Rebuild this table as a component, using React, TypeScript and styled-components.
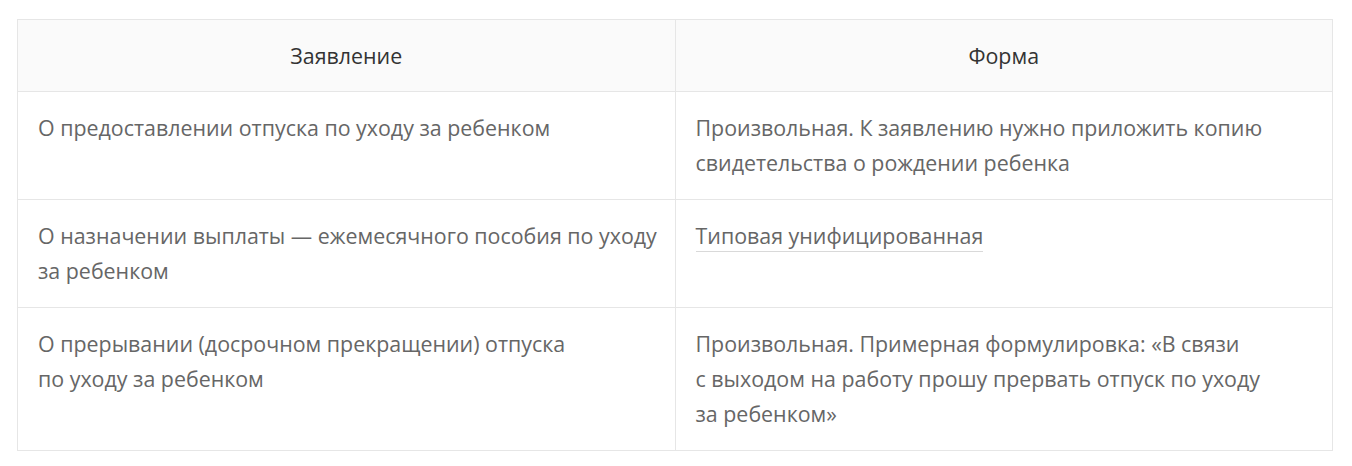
import styled, { createGlobalStyle } from "styled-components";

const Global = createGlobalStyle`
  body {
    margin: 0;
    background: #fff;
    font-family: "Open Sans", "Noto Sans", sans-serif;
  }
`;

const Wrapper = styled.div`
  padding: 19px 19px 0 17px;
`;

const Table = styled.table`
  width: 100%;
  border-collapse: collapse;
  table-layout: fixed;
  font-size: 21.4px;
  line-height: 35px;
  color: #666;
`;

const HeadCell = styled.th`
  width: 50%;
  padding: 18px 20px;
  background: #fafafa;
  border: 1px solid #e6e6e6;
  font-weight: 400;
  color: #333;
  text-align: center;
`;

// line breaks are set by hand, so cells don't wrap on their own
const Cell = styled.td`
  padding: 18px 20px 19px;
  border: 1px solid #e6e6e6;
  vertical-align: top;
  text-align: left;
  white-space: nowrap;
`;

const DocLink = styled.a`
  color: #666;
  text-decoration: none;
  border-bottom: 1px solid #d9d9d9;
  padding-bottom: 1px;
`;

const rows = [
  {
    kind: <>О предоставлении отпуска по уходу за ребенком</>,
    form: (
      <>
        Произвольная. К заявлению нужно приложить копию
        <br />
        свидетельства о рождении ребенка
      </>
    ),
  },
  {
    kind: (
      <>
        О назначении выплаты — ежемесячного пособия по уходу
        <br />
        за ребенком
      </>
    ),
    form: <DocLink href="#">Типовая унифицированная</DocLink>,
  },
  {
    kind: (
      <>
        О прерывании (досрочном прекращении) отпуска
        <br />
        по уходу за ребенком
      </>
    ),
    form: (
      <>
        Произвольная. Примерная формулировка: «В связи
        <br />
        с выходом на работу прошу прервать отпуск по уходу
        <br />
        за ребенком»
      </>
    ),
  },
];

export default function App() {
  return (
    <Wrapper>
      <Global />
      <Table>
        <thead>
          <tr>
            <HeadCell>Заявление</HeadCell>
            <HeadCell>Форма</HeadCell>
          </tr>
        </thead>
        <tbody>
          {rows.map((r, i) => (
            <tr key={i}>
              <Cell>{r.kind}</Cell>
              <Cell>{r.form}</Cell>
            </tr>
          ))}
        </tbody>
      </Table>
    </Wrapper>
  );
}
